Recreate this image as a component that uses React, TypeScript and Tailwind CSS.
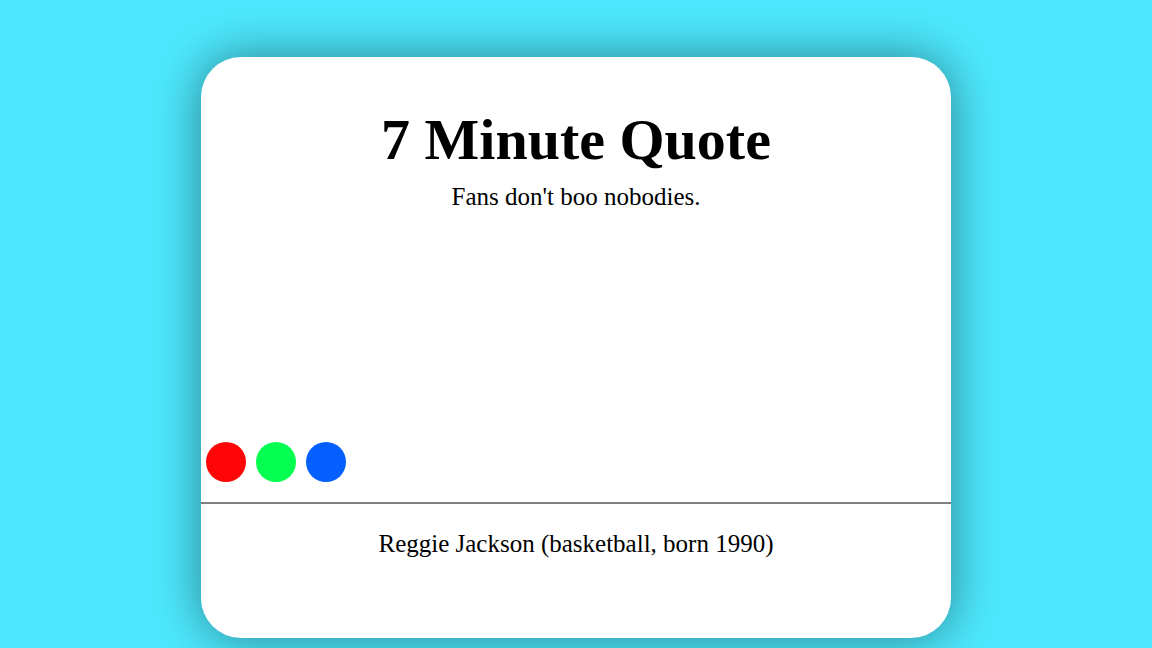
export default function App() {
  const colors = ['bg-[#ff0508]', 'bg-[#05ff50]', 'bg-[#055fff]']

  return (
    <div className="min-h-screen bg-[#4de8fd] flex justify-center pt-[57px] font-['Liberation_Serif','Times_New_Roman',serif] text-black">
      <div className="w-[750px] h-[581px] bg-white rounded-[40px] shadow-[0_0_50px_rgba(0,0,0,0.45)] flex flex-col overflow-hidden">
        <div className="h-[445px] flex flex-col items-center">
          <h1 className="mt-[54px] text-[58px] leading-[58px] font-bold">7 Minute Quote</h1>
          <p className="mt-[15px] text-[25px] leading-[25px]">Fans don't boo nobodies.</p>
          <div className="mt-auto mb-[15px] self-start flex">
            {colors.map((c, i) => (
              <div key={i} className={`w-10 h-10 m-[5px] rounded-full ${c}`} />
            ))}
          </div>
        </div>
        <div className="border-t-2 border-[#808080]" />
        <p className="pt-[27px] text-center text-[25px] leading-[25px]">Reggie Jackson (basketball, born 1990)</p>
      </div>
    </div>
  )
}
